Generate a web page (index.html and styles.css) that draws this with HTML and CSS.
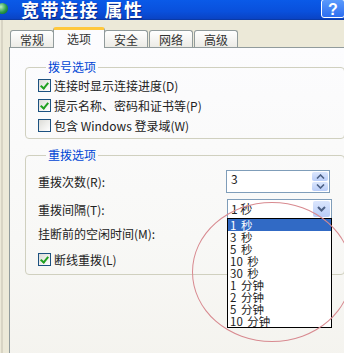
FILE: index.html
```html
<!DOCTYPE html>
<html lang="zh-CN">
<head>
    <meta charset="UTF-8">
    <meta name="viewport" content="width=device-width, initial-scale=1.0">
    <title>宽带连接 属性</title>
    <link rel="stylesheet" href="styles.css">
</head>
<body>
    <div class="window">
        <div class="titlebar">
            <span class="app-icon"></span>
            <span class="title">宽带连接 属性</span>
            <span class="help">?</span>
        </div>

        <div class="client">
            <div class="tabs">
                <div class="tab">常规</div>
                <div class="tab active">选项</div>
                <div class="tab">安全</div>
                <div class="tab">网络</div>
                <div class="tab">高级</div>
            </div>

            <div class="panel">
                <fieldset class="group dial">
                    <legend>拨号选项</legend>
                    <label class="check-row"><span class="checkbox checked"></span>连接时显示连接进度(D)</label>
                    <label class="check-row"><span class="checkbox checked"></span>提示名称、密码和证书等(P)</label>
                    <label class="check-row"><span class="checkbox"></span>包含 Windows 登录域(W)</label>
                </fieldset>

                <fieldset class="group redial">
                    <legend>重拨选项</legend>
                    <div class="field-row row-count">
                        <span class="field-label">重拨次数(R):</span>
                        <div class="spin">
                            <span class="spin-value">3</span>
                            <span class="spin-buttons">
                                <span class="spin-btn"><svg width="9" height="5" viewBox="0 0 9 5"><path d="M1 4.5 L4.5 1 L8 4.5" fill="none" stroke="#4d6185" stroke-width="1.6"/></svg></span>
                                <span class="spin-btn"><svg width="9" height="5" viewBox="0 0 9 5"><path d="M1 0.5 L4.5 4 L8 0.5" fill="none" stroke="#4d6185" stroke-width="1.6"/></svg></span>
                            </span>
                        </div>
                    </div>
                    <div class="field-row row-interval">
                        <span class="field-label">重拨间隔(T):</span>
                        <div class="combo">
                            <span class="combo-value">1 秒</span>
                            <span class="combo-btn"><svg width="9" height="6" viewBox="0 0 9 6"><path d="M1 1 L4.5 4.5 L8 1" fill="none" stroke="#4d6185" stroke-width="2"/></svg></span>
                            <ul class="combo-list">
                                <li class="selected">1 秒</li>
                                <li>3 秒</li>
                                <li>5 秒</li>
                                <li>10 秒</li>
                                <li>30 秒</li>
                                <li>1 分钟</li>
                                <li>2 分钟</li>
                                <li>5 分钟</li>
                                <li>10 分钟</li>
                            </ul>
                        </div>
                    </div>
                    <div class="field-row row-idle">
                        <span class="field-label">挂断前的空闲时间(M):</span>
                    </div>
                    <label class="check-row row-redial"><span class="checkbox checked"></span>断线重拨(L)</label>
                </fieldset>
            </div>
        </div>

        <div class="mark"></div>
    </div>
</body>
</html>
```

FILE: styles.css
```css
body {
    margin: 0;
    padding: 0;
    font-family: "Noto Sans CJK SC", "Liberation Sans", sans-serif;
    font-size: 12px;
    color: #222;
    background-color: #ece9d8;
}
.window {
    position: relative;
    width: 344px;
    height: 353px;
    overflow: hidden;
    background-color: #ece9d8;
}
.titlebar {
    display: flex;
    align-items: flex-start;
    height: 20px;
    background: linear-gradient(#0a5ae8, #0950dc 60%, #0a43c4);
    border-bottom: 1px solid #0a3aa8;
    box-sizing: border-box;
}
.app-icon {
    width: 11px;
    height: 11px;
    margin: 3px 0 0 -3px;
    border-radius: 50%;
    background: radial-gradient(circle at 35% 35%, #b8f0c0, #2a9a4a 55%, #0b5a22);
    flex: none;
}
.title {
    margin: 0 0 0 13px;
    font-size: 18px;
    font-weight: bold;
    line-height: 18px;
    color: #fff;
    letter-spacing: 1.5px;
    text-shadow: 1px 1px 0 #0a2a8a;
}
.help {
    margin-left: auto;
    width: 24px;
    height: 19px;
    margin-top: -1px;
    margin-right: -1px;
    border: 1px solid #fff;
    border-radius: 3px;
    background: linear-gradient(#5a9afc, #2d6ef0);
    color: #fff;
    font-family: "Liberation Sans", sans-serif;
    font-size: 16px;
    font-weight: bold;
    line-height: 19px;
    text-align: center;
    box-sizing: border-box;
}
.client {
    padding: 8px 0 0 6px;
    border-left: 2px solid #d8d4c4;
    margin-left: 1px;
}
.tabs {
    display: flex;
    align-items: flex-end;
    height: 19px;
    padding-left: 1px;
    position: relative;
    z-index: 1;
}
.tab {
    width: 44px;
    height: 17px;
    margin-right: 1px;
    border: 1px solid #919b9c;
    border-bottom: none;
    border-radius: 3px 3px 0 0;
    background: linear-gradient(#ffffff, #ecebe6);
    line-height: 17px;
    text-align: center;
    box-sizing: border-box;
    color: #333;
}
.tab.active {
    width: 52px;
    height: 21px;
    margin: 0 -1px -1px -2px;
    border-top: 3px solid #ffc83c;
    background: #fcfcfe;
    line-height: 17px;
}
.panel {
    height: 320px;
    padding: 12px 0 0 15px;
    margin-right: -8px;
    border: 1px solid #919b9c;
    background: linear-gradient(#fcfcfe, #f8f8f6 60%, #f4f3ee);
    box-sizing: border-box;
}
.group {
    margin: 0;
    width: 320px;
    border: 1px solid #d0d0bf;
    border-radius: 4px;
    box-sizing: border-box;
}
.group legend {
    margin-left: 8px;
    padding: 0 2px;
    line-height: 14px;
    color: #0046d5;
}
.dial {
    padding: 1px 0 3px 12px;
}
.redial {
    margin-top: 9px;
    padding: 0 14px 5px 12px;
}
.check-row {
    display: flex;
    align-items: center;
    height: 20px;
    gap: 3px;
}
.checkbox {
    width: 13px;
    height: 13px;
    border: 1px solid #1c5180;
    background: linear-gradient(135deg, #dcdcd7, #ffffff);
    box-sizing: border-box;
    position: relative;
    flex: none;
}
.checkbox.checked::after {
    content: "";
    position: absolute;
    left: 3px;
    top: 1px;
    width: 3px;
    height: 6px;
    border: solid #21a121;
    border-width: 0 2px 2px 0;
    transform: rotate(40deg);
}
.field-row {
    display: flex;
    align-items: center;
}
.field-label {
    flex: 1;
}
.row-count {
    margin-top: 7px;
    height: 24px;
}
.row-interval {
    margin-top: 5px;
    height: 22px;
}
.row-idle {
    margin-top: 3px;
    height: 20px;
}
.row-redial {
    margin-top: 6px;
}
.spin {
    display: flex;
    width: 104px;
    height: 23px;
    border: 1px solid #7f9db9;
    background: #fff;
    box-sizing: border-box;
}
.spin-value {
    flex: 1;
    padding: 1px 0 0 4px;
    line-height: 14px;
}
.spin-buttons {
    display: flex;
    flex-direction: column;
    width: 16px;
    padding: 1px;
    gap: 1px;
}
.spin-btn,
.combo-btn {
    display: flex;
    align-items: center;
    justify-content: center;
    background: linear-gradient(#dbe6fd, #b9cdf8);
    border-radius: 2px;
}
.spin-btn {
    flex: 1;
}
.combo {
    position: relative;
    display: flex;
    width: 105px;
    height: 20px;
    margin-right: -2px;
    border: 1px solid #7f9db9;
    background: #fff;
    box-sizing: border-box;
}
.combo-value {
    flex: 1;
    padding-left: 3px;
    line-height: 18px;
    white-space: pre;
}
.combo-btn {
    width: 17px;
    margin: 1px;
}
.combo-list {
    position: absolute;
    left: -1px;
    top: 18px;
    width: 105px;
    margin: 0;
    padding: 0;
    list-style: none;
    border: 1px solid #000;
    background: #fff;
    box-sizing: border-box;
    z-index: 2;
}
.combo-list li {
    height: 12px;
    padding-left: 2px;
    font-size: 11.5px;
    line-height: 12px;
    word-spacing: 2px;
    white-space: pre;
}
.combo-list li.selected {
    background: #316ac5;
    color: #fff;
}
.mark {
    position: absolute;
    left: 192px;
    top: 202px;
    width: 160px;
    height: 140px;
    border: 1.5px solid #d88a90;
    border-radius: 50%;
    box-sizing: border-box;
    z-index: 3;
    pointer-events: none;
}
```
